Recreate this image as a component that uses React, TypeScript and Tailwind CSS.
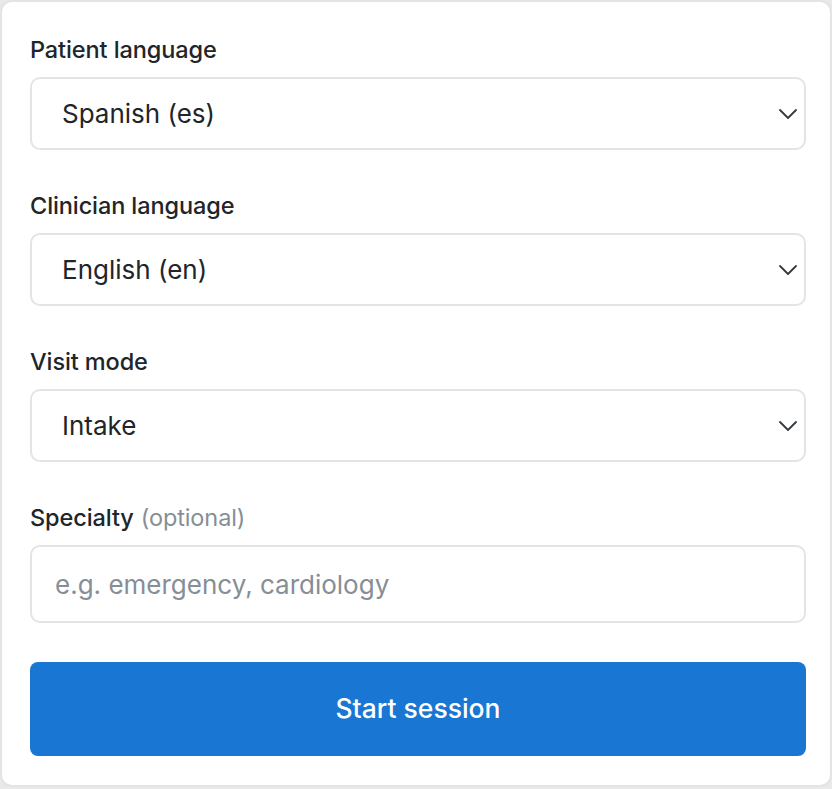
import React, { useState } from 'react';

const font = { fontFamily: 'Inter, "Noto Sans", sans-serif' };

interface SelectFieldProps {
  label: string;
  value: string;
  options: string[];
  onChange: (v: string) => void;
}

const Chevron = () => (
  <svg
    className="pointer-events-none absolute right-[9px] top-1/2 -translate-y-1/2"
    width="18"
    height="10"
    viewBox="0 0 18 10"
    fill="none"
  >
    <path d="M1 1l8 8 8-8" stroke="#343a40" strokeWidth="1.8" strokeLinecap="round" strokeLinejoin="round" />
  </svg>
);

const SelectField: React.FC<SelectFieldProps> = ({ label, value, options, onChange }) => {
  return (
    <div className="flex flex-col">
      <label className="h-8 flex items-center text-[23.5px] font-medium text-[#212529] tracking-[-0.1px]">{label}</label>
      <div className="relative mt-[11px]">
        <select
          value={value}
          onChange={e => onChange(e.target.value)}
          className="w-full h-[73px] appearance-none rounded-[10px] border-2 border-[#e4e4e4] bg-white pl-[30px] pr-12 text-[26px] text-[#212529] outline-none"
        >
          {options.map(o => (
            <option key={o}>{o}</option>
          ))}
        </select>
        <Chevron />
      </div>
    </div>
  );
};

const App: React.FC = () => {
  const [patientLang, setPatientLang] = useState('Spanish (es)');
  const [clinicianLang, setClinicianLang] = useState('English (en)');
  const [mode, setMode] = useState('Intake');
  const [specialty, setSpecialty] = useState('');

  const languages = ['Spanish (es)', 'English (en)', 'French (fr)', 'Chinese (zh)'];

  return (
    <div className="w-[832px] h-[789px] bg-[#e9e9e9]" style={font}>
      <div className="h-[787px] rounded-xl border-2 border-[#e4e4e4] bg-white pl-[28px] pr-[24px] pt-[32px]">
        <div className="flex flex-col gap-[40px]">
          <SelectField label="Patient language" value={patientLang} options={languages} onChange={setPatientLang} />
          <SelectField label="Clinician language" value={clinicianLang} options={languages} onChange={setClinicianLang} />
          <SelectField label="Visit mode" value={mode} options={['Intake', 'Follow-up', 'Discharge']} onChange={setMode} />
          <div className="flex flex-col">
            <label className="h-8 flex items-center text-[23.5px] font-medium text-[#212529] tracking-[-0.1px]">
              Specialty<span className="ml-[7px] font-normal text-[#868e96]">(optional)</span>
            </label>
            <input
              value={specialty}
              onChange={e => setSpecialty(e.target.value)}
              placeholder="e.g. emergency, cardiology"
              className="mt-[11px] h-[78px] w-full rounded-[10px] border-2 border-[#e4e4e4] bg-white px-[23px] text-[26px] text-[#212529] placeholder:text-[#868e96] outline-none"
            />
          </div>
        </div>
        <button className="mt-[39px] h-[94px] w-full rounded-[8px] bg-[#1976d2] text-[26.5px] font-medium text-white">
          Start session
        </button>
      </div>
    </div>
  );
};

export default App;
